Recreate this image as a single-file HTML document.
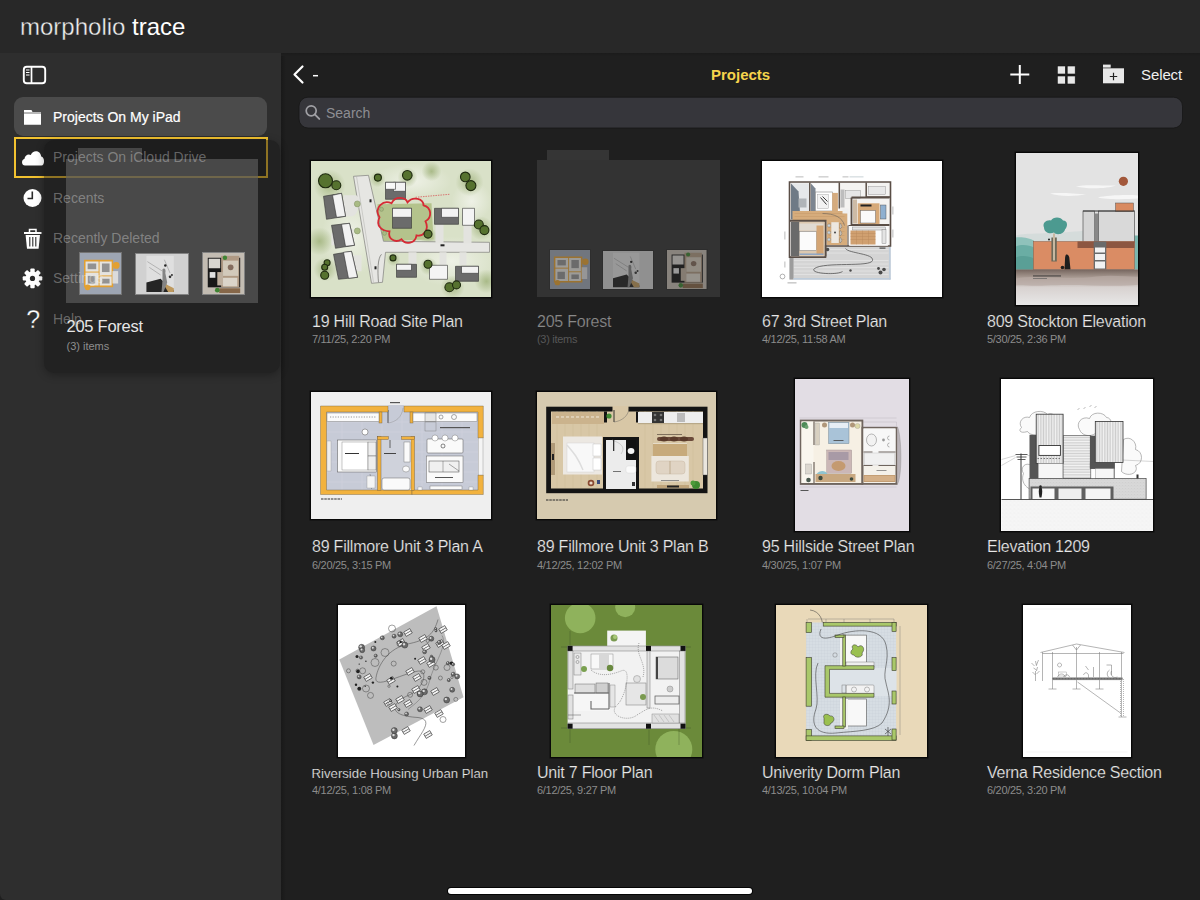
<!DOCTYPE html>
<html><head><meta charset="utf-8">
<style>
*{box-sizing:border-box;margin:0;padding:0}
html,body{width:1200px;height:900px;overflow:hidden;background:#1f1f1f;font-family:"Liberation Sans",sans-serif;line-height:1}
.abs{position:absolute}
#top{left:0;top:0;width:1200px;height:53px;background:#282828}
#logo{left:20px;top:14.7px;font-size:24px;color:#f2f2f2;white-space:nowrap}
#side{left:0;top:53px;width:281px;height:847px;background:#2e2e2e;border-bottom-left-radius:6px}
#main{left:281px;top:53px;width:919px;height:847px;background:#1f1f1f}
.t{position:absolute;font-size:16px;color:#e8e8e8;white-space:nowrap;letter-spacing:-0.22px;-webkit-text-stroke:0.2px #1f1f1f}
.d{position:absolute;font-size:11px;color:#8c8c8c;white-space:nowrap;letter-spacing:-0.3px}
.th{position:absolute;overflow:hidden;border:1px solid #080808;box-shadow:0 0 0 0.6px rgba(0,0,0,0.45)}
.sl{position:absolute;left:53px;font-size:14px;color:#fff;white-space:nowrap}
.b{-webkit-text-stroke:0.2px #fff}
svg{position:absolute;overflow:visible}
</style></head><body>
<div id="top" class="abs"></div>
<div id="logo" class="abs"><span style="color:#f0f0f0;-webkit-text-stroke:0.35px #282828">morpholio</span> <span style="color:#fff">trace</span></div>
<div id="side" class="abs"></div>
<div id="main" class="abs"></div>
<div class="abs" style="left:281px;top:53px;width:5px;height:847px;background:linear-gradient(90deg,#191919,#1f1f1f)"></div>
<div class="abs" style="left:281px;top:53px;width:919px;height:3px;background:linear-gradient(#1b1b1b,#1f1f1f)"></div>

<!-- ===== SIDEBAR ===== -->
<svg style="left:0;top:0" width="60" height="100">
  <rect x="23.8" y="66.8" width="21.4" height="16.4" rx="3" fill="none" stroke="#fff" stroke-width="1.9"/>
  <line x1="31.5" y1="67" x2="31.5" y2="83" stroke="#fff" stroke-width="1.7"/>
  <line x1="26" y1="70" x2="29.5" y2="70" stroke="#fff" stroke-width="1"/>
  <line x1="26" y1="72.5" x2="29.5" y2="72.5" stroke="#fff" stroke-width="1"/>
  <line x1="26" y1="75" x2="29.5" y2="75" stroke="#fff" stroke-width="1"/>
</svg>
<div class="abs" style="left:14px;top:97px;width:253px;height:39px;border-radius:9px;background:#4b4b4b"></div>
<svg style="left:0;top:0" width="60" height="140">
  <path d="M24 110 h7.5 l1 2 H41 V124.7 H24 Z" fill="#fff"/>
  <path d="M24 113 H41" stroke="#4b4b4b" stroke-width="0.8"/>
</svg>
<div class="sl b" style="top:109.5px">Projects On My iPad</div>

<!-- iCloud row (drop target) -->
<div class="abs" style="left:14px;top:137px;width:254px;height:41px;border:2px solid #f2c230;background:#252525"></div>
<svg style="left:0;top:0" width="60" height="200">
  <path d="M25 165.6 C21.5 165.6 20.8 160 24.5 158.8 C24.8 155 28.5 153.5 30.8 155 C32.3 149.8 40.5 149.5 41.2 156.5 C45 157 45 165.6 41.5 165.6 Z" fill="#fff"/>
</svg>

<svg style="left:0;top:0" width="60" height="340">
  <circle cx="32.5" cy="198" r="9" fill="#fff"/>
  <path d="M32.3 191.5 V198.5 H27.5" fill="none" stroke="#2a2a2a" stroke-width="1.6"/>
  <!-- trash -->
  <path d="M24 233 H41.5" stroke="#fff" stroke-width="2"/>
  <path d="M29.5 232.5 V229.5 H36 V232.5" fill="none" stroke="#fff" stroke-width="1.5"/>
  <path d="M25.6 235 H40 L38.6 248.7 H27 Z" fill="#fff"/>
  <path d="M29.8 237 V246.5 M32.8 237 V246.5 M35.8 237 V246.5" stroke="#2a2a2a" stroke-width="1.1"/>
  <!-- gear -->
  <g transform="translate(32.5 278.4)">
    <circle r="7" fill="#fff"/>
    <g fill="#fff">
      <rect x="-2.2" y="-9.8" width="4.4" height="19.6" rx="1"/>
      <rect x="-2.2" y="-9.8" width="4.4" height="19.6" rx="1" transform="rotate(45)"/>
      <rect x="-2.2" y="-9.8" width="4.4" height="19.6" rx="1" transform="rotate(90)"/>
      <rect x="-2.2" y="-9.8" width="4.4" height="19.6" rx="1" transform="rotate(135)"/>
    </g>
    <circle r="2.6" fill="#2a2a2a"/>
  </g>
</svg>
<div class="abs" style="left:26.3px;top:307px;font-size:25px;color:#fff;-webkit-text-stroke:0.3px #2e2e2e">?</div>

<!-- drag overlay -->
<div class="abs" style="left:44px;top:140px;width:236px;height:233px;border-radius:10px;background:rgba(20,20,20,0.45);box-shadow:0 2px 8px rgba(0,0,0,0.3)"></div>
<div class="abs" style="left:78px;top:148px;width:64px;height:11px;background:rgba(95,95,95,0.62)"></div>
<div class="abs" style="left:66px;top:159px;width:192px;height:144px;background:rgba(95,95,95,0.65)"></div>
<div class="abs" style="left:79px;top:252px;width:43px;height:43px;border:1px solid #777;opacity:0.92"><svg width="100%" height="100%" viewBox="0 0 43 43" preserveAspectRatio="none" style="position:static;display:block">
<rect width="43" height="43" fill="#a5adbc"/>
<rect x="5" y="8" width="29" height="27" fill="#f3f1ec"/>
<path d="M5 8 H34 V35 H5 Z" fill="none" stroke="#f0a830" stroke-width="1.6"/>
<path d="M20 8 V35 M5 20 H20 M20 24 H34" stroke="#f0a830" stroke-width="1"/>
<g fill="#999"><rect x="8" y="11" width="9" height="6"/><rect x="23" y="11" width="8" height="9"/><rect x="8" y="24" width="8" height="8"/><rect x="23" y="27" width="8" height="5"/></g>
<circle cx="38" cy="13" r="3.5" fill="#f0a830"/>
<rect x="34" y="19" width="6" height="13" fill="#e8e8e8"/>
<circle cx="8" cy="36" r="3" fill="#f0a830"/>
</svg>
</div>
<div class="abs" style="left:135px;top:253px;width:54px;height:42px;border:1px solid #888;opacity:0.92"><svg width="100%" height="100%" viewBox="0 0 55 42" preserveAspectRatio="none" style="position:static;display:block">
<rect width="55" height="42" fill="#dddddd"/>
<rect x="11" y="2" width="29" height="38" fill="#ececec"/>
<path d="M12 8 L28 18 M14 14 L26 22 M30 6 L36 20" stroke="#999" stroke-width="0.6"/>
<path d="M11 30 L26 26 L34 34 L40 38 V40 H11 Z" fill="#222"/>
<path d="M28 30 L40 36 V40 H34 Z" fill="#c8a060"/>
<path d="M28 16 C30 14 32 16 31 20 L33 30 L29 40 H27 L28 28 Z" fill="#8a8a8a"/>
<circle cx="31" cy="12" r="1.3" fill="#222"/>
<circle cx="36" cy="24" r="1.4" fill="#333"/><circle cx="38" cy="22" r="1.1" fill="#333"/>
</svg>
</div>
<div class="abs" style="left:202px;top:252px;width:43px;height:43px;border:1px solid #888;opacity:0.92"><svg width="100%" height="100%" viewBox="0 0 43 43" preserveAspectRatio="none" style="position:static;display:block">
<rect width="43" height="43" fill="#cec6bb"/>
<rect x="5" y="5" width="34" height="31" fill="#141414"/>
<rect x="6" y="6" width="12" height="10" fill="#e6e2dc"/>
<rect x="19" y="3" width="19" height="33" fill="#b8a088"/>
<rect x="21" y="8" width="16" height="16" fill="#ded4c4"/>
<circle cx="29" cy="15" r="3" fill="#8a7060"/>
<rect x="15" y="20" width="6" height="14" fill="#c8b8a6"/>
<rect x="7" y="20" width="6" height="6" fill="#eee"/>
<rect x="21" y="26" width="15" height="9" fill="#e8e0d4"/>
<rect x="17" y="37" width="22" height="5" fill="#8c6a4a"/>
<circle cx="15" cy="39" r="2.5" fill="#3f8a32"/><circle cx="23" cy="5" r="2.3" fill="#3f8a32"/>
</svg>
</div>
<div class="sl" style="top:150.2px;color:rgba(255,255,255,0.33)">Projects On iCloud Drive</div>
<div class="sl" style="top:190.5px;color:rgba(255,255,255,0.33)">Recents</div>
<div class="sl" style="top:230.8px;color:rgba(255,255,255,0.33)">Recently Deleted</div>
<div class="sl" style="top:271.3px;color:rgba(255,255,255,0.33)">Settings</div>
<div class="sl" style="top:311.8px;color:rgba(255,255,255,0.33)">Help</div>
<div class="abs" style="left:66.5px;top:318.3px;font-size:16.5px;color:#e6e6e6;letter-spacing:-0.25px;white-space:nowrap">205 Forest</div>
<div class="abs" style="left:66.5px;top:341px;font-size:11px;color:#8e8e8e;white-space:nowrap">(3) items</div>

<!-- ===== MAIN HEADER ===== -->
<svg style="left:0;top:0" width="1200" height="140">
  <path d="M302.5 66.5 L294.5 74.5 L302.5 82.5" fill="none" stroke="#fff" stroke-width="2.2" stroke-linecap="round" stroke-linejoin="round"/>
  <path d="M313 75.7 H318" stroke="#fff" stroke-width="1.5"/>
  <path d="M1010.3 74.6 H1029.3 M1019.8 65.1 V84.1" stroke="#fff" stroke-width="2"/>
  <g fill="#e8e8e8" stroke="#111" stroke-width="0.6">
    <rect x="1057.3" y="66" width="8" height="8"/><rect x="1067.2" y="66" width="8" height="8"/>
    <rect x="1057.3" y="76" width="8" height="8"/><rect x="1067.2" y="76" width="8" height="8"/>
  </g>
  <path d="M1103 64.6 h7.7 v3 H1103 Z" fill="#e8e8e8"/>
  <path d="M1103 68.3 H1124 V83.3 H1103 Z" fill="#e8e8e8"/>
  <path d="M1109.8 76.5 H1117.2 M1113.5 72.8 V80.2" stroke="#222" stroke-width="1.2"/>
  <!-- search -->
  <rect x="299" y="97.2" width="883.5" height="30.8" rx="9" fill="#36363b" stroke="#161616" stroke-width="0.8"/>
  <circle cx="311.2" cy="110.8" r="5" fill="none" stroke="#a0a0a5" stroke-width="1.7"/>
  <path d="M314.8 114.4 L319.3 118.9" stroke="#a0a0a5" stroke-width="1.9" stroke-linecap="round"/>
</svg>
<div class="abs" style="left:711px;top:67.3px;font-size:15px;font-weight:bold;color:#f6d44c">Projects</div>
<div class="abs" style="left:1141px;top:67px;font-size:15px;color:#f0f0f0;letter-spacing:-0.1px">Select</div>
<div class="abs" style="left:326px;top:105.7px;font-size:14px;color:#8e8e93">Search</div>

<!-- ===== GRID TITLES ===== -->
<div class="t" style="left:312px;top:313.5px">19 Hill Road Site Plan</div>
<div class="d" style="left:312px;top:334.4px">7/11/25, 2:20 PM</div>
<div class="t" style="left:537px;top:313.5px;color:#8a8a8a">205 Forest</div>
<div class="d" style="left:537px;top:334.4px;color:#575757">(3) items</div>
<div class="t" style="left:762px;top:313.5px">67 3rd Street Plan</div>
<div class="d" style="left:762px;top:334.4px">4/12/25, 11:58 AM</div>
<div class="t" style="left:987px;top:313.5px">809 Stockton Elevation</div>
<div class="d" style="left:987px;top:334.4px">5/30/25, 2:36 PM</div>

<div class="t" style="left:312px;top:538.8px">89 Fillmore Unit 3 Plan A</div>
<div class="d" style="left:312px;top:559.7px">6/20/25, 3:15 PM</div>
<div class="t" style="left:537px;top:538.8px">89 Fillmore Unit 3 Plan B</div>
<div class="d" style="left:537px;top:559.7px">4/12/25, 12:02 PM</div>
<div class="t" style="left:762px;top:538.8px">95 Hillside Street Plan</div>
<div class="d" style="left:762px;top:559.7px">4/30/25, 1:07 PM</div>
<div class="t" style="left:987px;top:538.8px">Elevation 1209</div>
<div class="d" style="left:987px;top:559.7px">6/27/25, 4:04 PM</div>

<div class="t" style="left:311.5px;top:766.5px;font-size:13.2px;letter-spacing:0">Riverside Housing Urban Plan</div>
<div class="d" style="left:312px;top:785.4px">4/12/25, 1:08 PM</div>
<div class="t" style="left:537px;top:764.6px">Unit 7 Floor Plan</div>
<div class="d" style="left:537px;top:785.4px">6/12/25, 9:27 PM</div>
<div class="t" style="left:762px;top:764.6px">Univerity Dorm Plan</div>
<div class="d" style="left:762px;top:785.4px">4/13/25, 10:04 PM</div>
<div class="t" style="left:987px;top:764.6px">Verna Residence Section</div>
<div class="d" style="left:987px;top:785.4px">6/20/25, 3:20 PM</div>

<!-- ===== THUMBNAILS ===== -->
<div class="th" style="left:310px;top:160px;width:182px;height:138px;background:#d9e1c8"><svg width="180" height="136" viewBox="-0.5 -0.3 180 136" preserveAspectRatio="none" style="position:static;display:block">
<defs>
<radialGradient id="g1a" cx="50%" cy="50%" r="50%"><stop offset="0" stop-color="#eef1e6"/><stop offset="1" stop-color="#eef1e6" stop-opacity="0"/></radialGradient><radialGradient id="g1b" cx="50%" cy="50%" r="50%"><stop offset="0" stop-color="#a9ba88"/><stop offset="1" stop-color="#a9ba88" stop-opacity="0"/></radialGradient>
</defs>
<rect width="179" height="135" fill="#d9e1c8"/>
<ellipse cx="100" cy="20" rx="40" ry="18" fill="url(#g1a)"/>
<ellipse cx="40" cy="75" rx="30" ry="40" fill="url(#g1a)"/>
<ellipse cx="140" cy="100" rx="45" ry="25" fill="url(#g1a)"/>
<ellipse cx="160" cy="40" rx="20" ry="20" fill="url(#g1a)"/>
<g fill="url(#g1b)">
<circle cx="18" cy="24" r="16"/><circle cx="66" cy="18" r="8"/><circle cx="96" cy="16" r="10"/><circle cx="158" cy="21" r="14"/>
<circle cx="170" cy="67" r="12"/><circle cx="117" cy="75" r="9"/><circle cx="14" cy="108" r="12"/><circle cx="117" cy="105" r="9"/>
<circle cx="141" cy="126" r="12"/><circle cx="82" cy="98" r="7"/><circle cx="8" cy="80" r="14"/><circle cx="175" cy="120" r="12"/><circle cx="120" cy="10" r="10"/>
</g>
<!-- lawn -->
<path d="M66 43 L120 42 L122 78 L66 80 Z" fill="#b4c38c"/>
<!-- roads -->
<path d="M42 15 L57 14 L72 80 L178 81 L178 91 L74 91 L71 121 L60 122 Z" fill="#e6e6e3" stroke="#8a8a86" stroke-width="0.8"/>
<path d="M45 15 L62 121" stroke="#b0b0ac" stroke-width="0.5"/>
<path d="M70 93 C66 97 66 110 67 121" fill="none" stroke="#7a7a76" stroke-width="0.8"/>
<!-- driveways -->
<path d="M124 63 H132 V82 H124 Z M152 63 H160 V82 H152 Z M97 91 H105 V103 H97 Z M128 91 H135 V104 H128 Z M148 91 H155 V104 H148 Z" fill="#e3e3df"/>
<path d="M32 34 H44 C50 34 48 55 40 55 H32Z M27 68 H42 V84 H20 V72Z M30 94 H50 V110 H30Z" fill="#e3e3df"/>
<!-- houses -->
<g stroke="#333" stroke-width="0.6">
<path d="M12 35 L30 32 L34 55 L15 58 Z" fill="#6b6b6b"/><path d="M21 34 L30 32 L34 55 L25 56 Z" fill="#f2f2f2"/>
<path d="M20 64 L38 62 L43 84 L24 87 Z" fill="#6b6b6b"/><path d="M30 63 L38 62 L43 84 L34 85 Z" fill="#f2f2f2"/>
<path d="M22 93 L40 90 L46 116 L27 118 Z" fill="#6b6b6b"/><path d="M32 91 L40 90 L46 116 L37 117 Z" fill="#f2f2f2"/>
<path d="M74 21 H94 V38 H74 Z" fill="#6b6b6b"/><path d="M82 21 H94 V30 H82 Z" fill="#f2f2f2"/><path d="M74 21 H84 V28 H74Z" fill="#f8f8f8"/>
<path d="M81 47 H100 V67 H81 Z" fill="#6b6b6b"/><path d="M81 47 H100 V56 H81 Z" fill="#f2f2f2"/>
<path d="M123 47 H147 V63 H123 Z" fill="#6b6b6b"/><path d="M130 47 H147 V56 H130 Z" fill="#f2f2f2"/>
<path d="M151 47 H163 V64 H151 Z" fill="#f4f4f4"/>
<path d="M85 103 H105 V116 H85 Z" fill="#6b6b6b"/><path d="M85 103 H100 V109 H85 Z" fill="#f2f2f2"/>
<path d="M118 104 H136 V118 H118 Z" fill="#f4f4f4"/>
<path d="M144 105 H167 V120 H144 Z" fill="#6b6b6b"/><path d="M150 105 H167 V112 H150 Z" fill="#f2f2f2"/>
</g>
<!-- red cloud -->
<path d="M68 56 C62 46 72 38 80 42 C84 34 94 36 96 41 C102 34 112 38 112 44 C120 46 121 56 114 60 C118 68 112 76 105 74 C104 82 94 84 90 78 C84 82 76 78 78 70 C70 70 64 64 68 56 Z" fill="none" stroke="#d62b35" stroke-width="1.8"/>
<path d="M104 36 L138 33" stroke="#d62b35" stroke-width="0.6" stroke-dasharray="1.5 1"/>
<!-- trees -->
<g fill="#56722f" stroke="#1f2a10" stroke-width="1.1">
<circle cx="14" cy="19.5" r="7"/><circle cx="24.8" cy="24" r="4.5"/>
<circle cx="66.4" cy="16.3" r="3.5"/><circle cx="95.8" cy="14" r="4.8"/>
<circle cx="153.8" cy="15.6" r="4.8"/><circle cx="159.4" cy="24.3" r="5"/>
<circle cx="167.3" cy="63.2" r="4.5"/><circle cx="172.9" cy="68.8" r="4.5"/>
<circle cx="116.5" cy="72.8" r="4"/><circle cx="15.6" cy="101.4" r="3"/><circle cx="13.2" cy="106" r="3"/><circle cx="13.2" cy="114" r="4"/>
<circle cx="116.5" cy="103" r="4"/><circle cx="137.9" cy="126" r="4.5"/><circle cx="145" cy="123.6" r="4"/>
<circle cx="81.5" cy="96.6" r="3"/>
</g>
<g fill="#a9bb84" stroke="#7d8c60" stroke-width="0.5">
<circle cx="45.8" cy="42.6" r="3"/><circle cx="45.8" cy="69.6" r="3"/><circle cx="70" cy="48" r="2"/><circle cx="73" cy="72" r="2"/>
</g>
<g fill="#222"><rect x="58" y="38" width="2" height="3"/><rect x="129" y="83" width="4" height="2"/><rect x="63" y="105" width="2" height="3"/></g>
</svg>
</div>
<div class="abs" style="left:547px;top:150px;width:62px;height:10px;background:#353535"></div>
<div class="abs" style="left:537px;top:160px;width:183px;height:137px;background:#333"></div>
<div class="abs" style="left:549px;top:249px;width:42px;height:41px;border:1px solid #2a2a2a;opacity:0.55"><svg width="100%" height="100%" viewBox="0 0 43 43" preserveAspectRatio="none" style="position:static;display:block">
<rect width="43" height="43" fill="#a5adbc"/>
<rect x="5" y="8" width="29" height="27" fill="#f3f1ec"/>
<path d="M5 8 H34 V35 H5 Z" fill="none" stroke="#f0a830" stroke-width="1.6"/>
<path d="M20 8 V35 M5 20 H20 M20 24 H34" stroke="#f0a830" stroke-width="1"/>
<g fill="#999"><rect x="8" y="11" width="9" height="6"/><rect x="23" y="11" width="8" height="9"/><rect x="8" y="24" width="8" height="8"/><rect x="23" y="27" width="8" height="5"/></g>
<circle cx="38" cy="13" r="3.5" fill="#f0a830"/>
<rect x="34" y="19" width="6" height="13" fill="#e8e8e8"/>
<circle cx="8" cy="36" r="3" fill="#f0a830"/>
</svg>
</div>
<div class="abs" style="left:602px;top:249.5px;width:52px;height:40px;border:1px solid #2a2a2a;opacity:0.55"><svg width="100%" height="100%" viewBox="0 0 55 42" preserveAspectRatio="none" style="position:static;display:block">
<rect width="55" height="42" fill="#dddddd"/>
<rect x="11" y="2" width="29" height="38" fill="#ececec"/>
<path d="M12 8 L28 18 M14 14 L26 22 M30 6 L36 20" stroke="#999" stroke-width="0.6"/>
<path d="M11 30 L26 26 L34 34 L40 38 V40 H11 Z" fill="#222"/>
<path d="M28 30 L40 36 V40 H34 Z" fill="#c8a060"/>
<path d="M28 16 C30 14 32 16 31 20 L33 30 L29 40 H27 L28 28 Z" fill="#8a8a8a"/>
<circle cx="31" cy="12" r="1.3" fill="#222"/>
<circle cx="36" cy="24" r="1.4" fill="#333"/><circle cx="38" cy="22" r="1.1" fill="#333"/>
</svg>
</div>
<div class="abs" style="left:666px;top:249px;width:41.5px;height:41px;border:1px solid #2a2a2a;opacity:0.55"><svg width="100%" height="100%" viewBox="0 0 43 43" preserveAspectRatio="none" style="position:static;display:block">
<rect width="43" height="43" fill="#cec6bb"/>
<rect x="5" y="5" width="34" height="31" fill="#141414"/>
<rect x="6" y="6" width="12" height="10" fill="#e6e2dc"/>
<rect x="19" y="3" width="19" height="33" fill="#b8a088"/>
<rect x="21" y="8" width="16" height="16" fill="#ded4c4"/>
<circle cx="29" cy="15" r="3" fill="#8a7060"/>
<rect x="15" y="20" width="6" height="14" fill="#c8b8a6"/>
<rect x="7" y="20" width="6" height="6" fill="#eee"/>
<rect x="21" y="26" width="15" height="9" fill="#e8e0d4"/>
<rect x="17" y="37" width="22" height="5" fill="#8c6a4a"/>
<circle cx="15" cy="39" r="2.5" fill="#3f8a32"/><circle cx="23" cy="5" r="2.3" fill="#3f8a32"/>
</svg>
</div>
<div class="th" style="left:761px;top:160px;width:182px;height:138px;background:#fff"><svg width="180" height="136" viewBox="-0.5 -0.5 180 136" preserveAspectRatio="none" style="position:static;display:block">
<rect x="-1" y="-1" width="182" height="138" fill="#fff"/>
<g fill="#aaa"><rect x="33" y="15" width="8" height="0.8"/><rect x="56" y="15" width="10" height="0.8"/><rect x="80" y="15" width="6" height="0.8"/><rect x="87" y="15" width="14" height="0.8" fill="#bcc8cc"/>
<rect x="130" y="45" width="0.8" height="8"/><rect x="130" y="68" width="0.8" height="8"/><rect x="22" y="70" width="0.8" height="8"/><rect x="22" y="100" width="0.8" height="6"/></g>
<!-- patio -->
<path d="M63 84.5 H128 V118 H27 V95.6 H63 Z" fill="#d4d4d4"/>
<g stroke="#e6e6e6" stroke-width="0.7"><path d="M64 88 H126 M64 91.5 H126 M31 99 H126 M31 102.5 H126 M31 106 H126 M31 109.5 H126 M31 113 H126"/></g>
<rect x="27" y="95.6" width="4" height="22.4" fill="#9c9c9c"/>
<rect x="31" y="116.6" width="97" height="1.6" fill="#bccbdb"/>
<rect x="126.6" y="84.5" width="1.6" height="33.5" fill="#bccbdb"/>
<path d="M83 87 C86 92 112 92 110 99 C108 106 62 100 52 107 C46 112 74 114 80 110" fill="none" stroke="#555" stroke-width="0.8"/>
<g fill="#4a4a4a"><circle cx="118" cy="111" r="2"/><circle cx="121.5" cy="108" r="1.8"/><circle cx="116" cy="107" r="1.4"/><circle cx="88" cy="109" r="1.2"/><rect x="117" y="86" width="6" height="1.2"/><circle cx="65" cy="88" r="1.8"/></g>
<circle cx="20" cy="115" r="2.4" fill="none" stroke="#666" stroke-width="0.5"/>
<rect x="25" y="121" width="9" height="0.8" fill="#999"/>
<!-- building base -->
<path d="M27 20.5 H128 V84.5 H63 V95.6 H27 Z" fill="#f4f3f1" stroke="#5a4e46" stroke-width="1.6"/>
<!-- top-left bath -->
<rect x="28.5" y="22" width="18.5" height="36" fill="#e6e8ea"/>
<path d="M28.5 22 L36 30 L38 58 H28.5 Z" fill="#6f7a86"/>
<rect x="36" y="37" width="8" height="9" fill="#b0b4b8"/>
<path d="M47.3 21 V50" stroke="#5a4e46" stroke-width="1.5"/>
<!-- bedroom top -->
<rect x="48.5" y="22" width="28" height="28.5" fill="#fbfbfb"/>
<path d="M48.5 22 L53 27 V50 H48.5 Z" fill="#7c8590"/>
<rect x="53" y="30.5" width="17" height="19" fill="#fff" stroke="#888" stroke-width="0.6"/>
<rect x="55" y="33" width="11" height="14" fill="#f2f2f2" stroke="#999" stroke-width="0.4"/>
<path d="M58 36 L64 43 M60 35 L65 40" stroke="#222" stroke-width="0.9"/>
<rect x="69.7" y="31.4" width="5.7" height="21.8" fill="#d5ab7e"/>
<path d="M76.8 21 V47" stroke="#5a4e46" stroke-width="1.5"/>
<!-- top middle bath -->
<rect x="78" y="28" width="4" height="18" fill="#bdbdbd"/>
<rect x="83" y="29" width="15" height="8" fill="#e6e6e6" stroke="#888" stroke-width="0.4"/>
<path d="M103.7 21 V36" stroke="#5a4e46" stroke-width="1.5"/>
<rect x="106" y="25" width="17" height="8" fill="#e8e8e8" stroke="#888" stroke-width="0.4"/>
<path d="M104 35.5 H128" stroke="#5a4e46" stroke-width="1.5"/>
<!-- right bedroom -->
<path d="M89 36 H127 M89 36 V63.5 H127" fill="none" stroke="#5a4e46" stroke-width="1.8"/>
<rect x="90.5" y="38" width="4" height="24" fill="#cdbba6"/>
<rect x="95.2" y="41.8" width="21.8" height="20.8" fill="#d6a978"/>
<rect x="98" y="49" width="15" height="12.5" fill="#fafafa" stroke="#666" stroke-width="0.5"/>
<rect x="98" y="43" width="11" height="2" fill="#222"/>
<rect x="118" y="43.5" width="5.5" height="14" fill="#8fb0d0" stroke="#444" stroke-width="0.4"/>
<!-- corridor wood -->
<path d="M30 49.4 H84.8 V83.4 H64 V59.8 H30 Z" fill="#d6ac7c"/>
<g stroke="#c49868" stroke-width="0.5"><path d="M32 52 H82 M32 55 H82 M66 62 H82 M66 66 H82 M66 70 H82 M66 74 H82 M66 78 H82"/></g>
<path d="M60 52 C72 52 80 56 82 64" fill="none" stroke="#555" stroke-width="0.5"/>
<rect x="80" y="47" width="6" height="5" fill="#f0f0f0"/>
<!-- bedroom bottom left -->
<path d="M27.5 59.3 H63 V95" fill="none" stroke="#5a4e46" stroke-width="2"/>
<rect x="28.5" y="60.5" width="33.5" height="34" fill="#dcc8b0"/>
<rect x="28.5" y="60.5" width="8.2" height="34" fill="#6a6a6a"/>
<rect x="37" y="62" width="24" height="7" fill="#e0dad2"/>
<rect x="37" y="70" width="17" height="19" fill="#fbfbfb" stroke="#777" stroke-width="0.5"/>
<rect x="54" y="64" width="7" height="29" fill="#d4a574"/>
<rect x="37" y="92" width="24" height="1.4" fill="#88a4c8"/>
<!-- dining -->
<rect x="68.8" y="60.7" width="7.5" height="20.8" fill="#ece7e0"/>
<circle cx="72.5" cy="71" r="1" fill="#444"/>
<g fill="#c8d2d8" stroke="#666" stroke-width="0.3"><circle cx="66.5" cy="64" r="1.6"/><circle cx="66.5" cy="71" r="1.6"/><circle cx="66.5" cy="78" r="1.6"/></g>
<g fill="#e0d8cc" stroke="#555" stroke-width="0.4"><path d="M77.5 62 a3 3 0 0 1 0 5.5 Z M77.5 69 a3 3 0 0 1 0 5.5 Z M77.5 76 a3 3 0 0 1 0 5.5 Z"/></g>
<!-- kitchen -->
<rect x="86.7" y="64.5" width="38.7" height="19.8" fill="#fafafa"/>
<rect x="88" y="69" width="25" height="14" fill="#d0a070"/>
<g stroke="#b8895a" stroke-width="0.4"><path d="M88 72 H113 M88 75 H113 M88 78 H113 M94 69 V83 M100 69 V83 M106 69 V83"/></g>
<rect x="90" y="65.5" width="33" height="3" fill="#e4e4e4" stroke="#777" stroke-width="0.4"/>
<rect x="119.5" y="68" width="4" height="14" fill="#e4e4e4" stroke="#777" stroke-width="0.4"/>
<path d="M85.5 64 V84.5 M86 64 H126" stroke="#5a4e46" stroke-width="1"/>
</svg></div>
<div class="th" style="left:1015px;top:152px;width:124px;height:154px;background:#e3e3e3"><svg width="122" height="152" viewBox="0 -0.5 122 152" preserveAspectRatio="none" style="position:static;display:block">
<defs>
<linearGradient id="g4g" x1="0" y1="0" x2="0" y2="1"><stop offset="0" stop-color="#75655e"/><stop offset="0.22" stop-color="#a89a92"/><stop offset="0.5" stop-color="#d8d2d0"/><stop offset="1" stop-color="#e8e8e8"/></linearGradient>
</defs>
<rect x="0" y="0" width="124" height="152" fill="#e3e3e3"/>
<!-- clouds -->
<path d="M60 33 C68 31 80 32 100 32 C92 35 72 36 60 33 Z" fill="#f6f6f6"/>
<path d="M34 40 C44 39 58 40 70 41 C58 43 42 43 34 40 Z" fill="#f6f6f6"/>
<path d="M82 44 C90 42 110 41 122 42 L122 45 C108 46 90 46 82 44 Z" fill="#f6f6f6"/>
<circle cx="107.4" cy="27.8" r="4.6" fill="#a2573a"/>
<!-- hills -->
<path d="M0 82 C10 79 30 81 70 77 C90 75 110 82 124 84 V116 H0 Z" fill="#d5dcdb"/>
<path d="M0 84 C6 83 14 85 18 87 V116 H0 Z" fill="#8fc2bb"/>
<path d="M0 93 C6 90 14 92 18 94 V116 H0 Z" fill="#6aada4"/>
<path d="M0 104 C6 101 14 103 18 105 V116 H0 Z" fill="#5a9f96"/>
<rect x="118" y="82" width="6" height="34" fill="#7ab6ae"/>
<!-- upper volumes -->
<rect x="67" y="57.5" width="11.5" height="31.5" fill="#d5d5d5" stroke="#555" stroke-width="0.7"/>
<rect x="78.5" y="60" width="4" height="29" fill="#888"/>
<rect x="82.5" y="57.5" width="36" height="31.5" fill="#d9d9d9" stroke="#555" stroke-width="0.7"/>
<rect x="99.5" y="49.5" width="18" height="8.5" fill="#d98a60" stroke="#555" stroke-width="0.5"/>
<path d="M67 57.5 H118.5" stroke="#333" stroke-width="1"/>
<!-- wall -->
<rect x="17.4" y="88" width="101" height="28" fill="#da8c64" stroke="#8a5a44" stroke-width="0.5"/>
<rect x="61.5" y="88" width="57" height="6.5" fill="#8c5641"/>
<rect x="77.7" y="88" width="12.6" height="28" fill="#6a6a6a"/>
<rect x="79" y="94" width="10" height="5" fill="#f2f2f2"/><rect x="79" y="100.5" width="10" height="6" fill="#f2f2f2"/><rect x="79" y="108" width="10" height="7" fill="#f2f2f2"/>
<!-- tree -->
<rect x="35.4" y="84" width="5.4" height="24" fill="#6d6a5a"/>
<rect x="37" y="80" width="2" height="27" fill="#c8b8a0"/>
<path d="M28 74 C26 69 31 66 35 67 C37 63 45 63 47 67 C52 67 52 73 49 76 C48 81 40 82 38 79 C34 81 28 79 28 74 Z" fill="#4c9a90"/>
<circle cx="33" cy="86" r="1" fill="#222"/>
<!-- person -->
<path d="M50.5 101 C52.5 101 53.5 103 53.5 106 L54.5 116 H48.5 L49 106 C49 103 49.5 101 50.5 101 Z" fill="#1e1e1e"/>
<circle cx="46.5" cy="114" r="1.8" fill="#1e1e1e"/>
<!-- ground -->
<rect x="0" y="116" width="124" height="36" fill="url(#g4g)"/>
<path d="M0 125 C20 121 50 127 80 123 C100 121 115 124 124 123 V131 C100 134 60 130 30 132 C15 133 5 131 0 132 Z" fill="#b8aaa4" opacity="0.7"/>
<rect x="17" y="122" width="28" height="0.9" fill="#333"/><rect x="17" y="124.5" width="14" height="0.6" fill="#555"/>
</svg>
</div>

<div class="th" style="left:310px;top:391px;width:182px;height:129px;background:#efefef"><svg width="180" height="127" viewBox="-1 0 180 127" preserveAspectRatio="none" style="position:static;display:block">
<rect width="178" height="126" fill="#efefef"/>
<!-- floor -->
<rect x="14" y="19" width="152" height="80" fill="#c7cbd7"/>
<g stroke="#d3d6e0" stroke-width="0.4"><path d="M14 30 H166 M14 40 H166 M14 50 H166 M14 60 H166 M14 70 H166 M14 80 H166 M14 90 H166 M30 19 V99 M50 19 V99 M70 19 V99 M90 19 V99 M110 19 V99 M130 19 V99 M150 19 V99"/></g>
<!-- entrance door area -->
<rect x="76" y="13" width="16" height="8" fill="#c7cbd7"/>
<path d="M76 18 V31" stroke="#444" stroke-width="0.9"/><path d="M76 31 C84 30 90 25 91 16" fill="none" stroke="#888" stroke-width="0.4"/>
<rect x="78" y="10" width="10" height="1.2" fill="#555"/>
<!-- walls orange -->
<g fill="#f2b23e" stroke="#6a5a40" stroke-width="0.4">
<path d="M8.5 14 H76 V20 H14.5 V98 H100 V102.5 H8.5 Z"/>
<path d="M92 14 H171.3 V46 H166 V20 H92 Z"/>
<path d="M166 83 H171.3 V102.5 H100 V98 H166 Z"/>
<rect x="65.5" y="44.5" width="3.5" height="54"/>
<rect x="99" y="44.5" width="3.5" height="54"/>
<rect x="65.5" y="44.5" width="11" height="3"/><rect x="89.5" y="44.5" width="13" height="3"/>
<rect x="67" y="20" width="3" height="11"/><rect x="98" y="20" width="3" height="11"/>
</g>
<rect x="166.5" y="46" width="4.5" height="37" fill="#f4f4f4" stroke="#888" stroke-width="0.4"/>
<!-- counters -->
<rect x="15" y="21" width="52" height="8.5" fill="#fbfbfb" stroke="#666" stroke-width="0.4"/>
<path d="M18 25 H64" stroke="#555" stroke-width="0.6" stroke-dasharray="1.2 1.4"/>
<rect x="101" y="21" width="64" height="8.5" fill="#fbfbfb" stroke="#666" stroke-width="0.4"/>
<rect x="113" y="21" width="11" height="8.5" fill="#e6e6e6" stroke="#555" stroke-width="0.4"/>
<circle cx="129" cy="25" r="2" fill="none" stroke="#555" stroke-width="0.5"/><circle cx="142" cy="25" r="2.5" fill="none" stroke="#555" stroke-width="0.5"/>
<rect x="113" y="30" width="11" height="9" fill="none" stroke="#777" stroke-width="0.4"/>
<rect x="128" y="35" width="30" height="1.2" fill="#555"/>
<!-- bed -->
<rect x="25.6" y="48" width="39" height="32" fill="#f9f9f9" stroke="#555" stroke-width="0.5"/>
<rect x="30" y="50" width="26" height="28" fill="#fff" stroke="#777" stroke-width="0.4"/>
<rect x="56" y="50" width="8" height="14" fill="#eee" stroke="#555" stroke-width="0.4"/><rect x="56" y="64" width="8" height="14" fill="#eee" stroke="#555" stroke-width="0.4"/>
<rect x="33" y="61" width="14" height="1" fill="#333"/>
<circle cx="53" cy="40" r="3" fill="#fff" stroke="#555" stroke-width="0.5"/>
<rect x="15" y="49" width="4" height="30" fill="#eee" stroke="#888" stroke-width="0.3"/>
<path d="M58 82 C60 88 56 94 60 97" stroke="#666" fill="none" stroke-width="0.5"/>
<rect x="55" y="84" width="8" height="12" fill="#f4f4f4" stroke="#777" stroke-width="0.3"/>
<!-- bathroom -->
<rect x="70" y="48" width="29" height="50" fill="#cfd2db"/>
<rect x="92" y="50" width="6" height="20" fill="#fafafa" stroke="#666" stroke-width="0.4"/>
<ellipse cx="94" cy="77" rx="3.5" ry="3" fill="#fafafa" stroke="#666" stroke-width="0.4"/>
<rect x="70" y="86" width="28" height="12" rx="2" fill="#fafafa" stroke="#666" stroke-width="0.5"/>
<path d="M78 48 V56" stroke="#444" stroke-width="0.8"/>
<rect x="72" y="61" width="12" height="1" fill="#444"/>
<!-- island -->
<rect x="115" y="47" width="36" height="14" rx="1" fill="#fafafa" stroke="#555" stroke-width="0.5"/>
<g fill="#fff" stroke="#666" stroke-width="0.4"><circle cx="123" cy="46" r="3"/><circle cx="133" cy="46" r="3"/><circle cx="143" cy="46" r="3"/></g>
<circle cx="131" cy="54" r="2" fill="none" stroke="#333" stroke-width="0.6"/>
<!-- living -->
<rect x="114.4" y="64" width="36.6" height="26.3" fill="#fafafa" stroke="#666" stroke-width="0.5"/>
<rect x="117" y="69" width="30" height="11" fill="#f0f0f0" stroke="#444" stroke-width="0.5"/>
<path d="M131 69 V80" stroke="#444" stroke-width="0.4"/><path d="M137 72 L147 79" stroke="#555" stroke-width="0.5"/>
<rect x="123" y="85" width="18" height="1" fill="#555"/>
<rect x="118" y="94" width="32" height="3.5" fill="#fafafa" stroke="#666" stroke-width="0.4"/>
<rect x="106" y="95" width="4" height="3" fill="#fafafa" stroke="#777" stroke-width="0.3"/><rect x="157" y="95" width="4" height="3" fill="#fafafa" stroke="#777" stroke-width="0.3"/>
<!-- label -->
<path d="M9 107 H30" stroke="#333" stroke-width="1.2" stroke-dasharray="2.5 0.8"/>
</svg>
</div>
<div class="th" style="left:536px;top:391px;width:181px;height:129px;background:#d6caaf"><svg width="179" height="127" viewBox="0 0 179 127" preserveAspectRatio="none" style="position:static;display:block">
<rect width="179" height="126" fill="#d6caaf"/>
<!-- outer walls -->
<rect x="9.2" y="14.7" width="161.3" height="86.5" fill="#141414"/>
<!-- floor wood -->
<rect x="14" y="19.5" width="152" height="77" fill="#d8c7a6"/>
<g stroke="#cdb996" stroke-width="0.5"><path d="M20 19.5 V96 M28 19.5 V96 M36 19.5 V96 M44 19.5 V96 M52 19.5 V96 M60 19.5 V96 M108 19.5 V96 M116 19.5 V96 M124 19.5 V96 M132 19.5 V96 M140 19.5 V96 M148 19.5 V96 M156 19.5 V96"/></g>
<!-- entrance gap -->
<rect x="75.5" y="14" width="16" height="6" fill="#d8c7a6"/>
<path d="M77 18 V30" stroke="#222" stroke-width="0.9"/><path d="M77 30 C85 29 91 24 92 17" fill="none" stroke="#555" stroke-width="0.4"/>
<!-- window right -->
<rect x="166" y="46" width="4.5" height="37" fill="#eae6de" stroke="#444" stroke-width="0.4"/>
<!-- wardrobe -->
<rect x="15" y="20" width="52" height="12" fill="#cbb38d"/>
<path d="M19 25 H64" stroke="#f0e8da" stroke-width="1" stroke-dasharray="3 2"/>
<rect x="67" y="19.5" width="3" height="11" fill="#141414"/>
<circle cx="72" cy="24" r="2.6" fill="#3f8a32"/>
<rect x="99" y="19.5" width="3" height="11" fill="#141414"/>
<!-- kitchen counters -->
<rect x="101" y="20" width="65" height="11" fill="#eeeeee"/>
<rect x="115" y="20" width="12" height="11" fill="#333"/>
<g fill="#777"><circle cx="118" cy="23" r="1.3"/><circle cx="124" cy="23" r="1.3"/><circle cx="118" cy="28" r="1.3"/><circle cx="124" cy="28" r="1.3"/></g>
<rect x="140" y="21" width="8" height="9" fill="#bbb"/>
<rect x="101" y="31" width="65" height="1.2" fill="#b8a888"/>
<!-- bed -->
<rect x="26" y="44.5" width="39" height="38" fill="#ece8e2"/>
<rect x="30" y="51" width="27" height="29" fill="#f8f8f8" stroke="#ccc" stroke-width="0.4"/>
<rect x="56" y="52" width="8" height="12" fill="#fff" stroke="#bbb" stroke-width="0.4"/><rect x="56" y="66" width="8" height="12" fill="#fff" stroke="#bbb" stroke-width="0.4"/>
<path d="M30 53 C36 60 40 64 46 78" stroke="#ddd" stroke-width="1.5" fill="none"/>
<rect x="14" y="51" width="4" height="32" fill="#b09a78"/><rect x="15" y="62" width="2" height="6" fill="#222"/>
<circle cx="54" cy="91" r="3.3" fill="#8a4a32"/><circle cx="54" cy="91" r="1.6" fill="#e8d8c8"/>
<rect x="60" y="88" width="3" height="4" fill="#3a4a7a"/>
<!-- bathroom -->
<rect x="66" y="45" width="36" height="56" fill="#141414"/>
<rect x="69" y="48" width="30" height="49" fill="#ececec"/>
<path d="M75 48 C86 52 88 56 84 62" fill="none" stroke="#aaa" stroke-width="0.5"/>
<rect x="76" y="48" width="1.3" height="11" fill="#333"/>
<rect x="89" y="48" width="10" height="20" fill="#111"/>
<ellipse cx="94" cy="59" rx="3.4" ry="3" fill="#f4f4f4"/>
<rect x="89" y="74" width="10" height="7" rx="2" fill="#fafafa" stroke="#ccc" stroke-width="0.3"/>
<rect x="95" y="90" width="3" height="4" fill="#333"/>
<rect x="76" y="79" width="8" height="0.8" fill="#555"/>
<!-- dining -->
<rect x="120" y="45" width="37" height="4" rx="2" fill="#6b4a3a"/>
<g fill="#5a3a2a"><ellipse cx="127" cy="47" rx="4" ry="2.5"/><ellipse cx="137" cy="47" rx="4" ry="2.5"/><ellipse cx="147" cy="47" rx="4" ry="2.5"/></g>
<rect x="116" y="51" width="34" height="14" fill="#c7aa7b"/>
<rect x="116" y="51" width="34" height="1" fill="#e6dcc8"/>
<rect x="120" y="42" width="25" height="0.8" fill="#6a5a4a"/>
<!-- living rug -->
<rect x="114.4" y="64" width="37.4" height="25.5" fill="#ece6dc"/>
<rect x="119" y="69" width="29" height="13" rx="3" fill="#e0d4c4" stroke="#c8b8a4" stroke-width="0.5"/>
<path d="M133 69 V82" stroke="#a89070" stroke-width="0.6"/>
<rect x="120" y="93" width="32" height="3" fill="#bfa47a"/><rect x="130" y="93.5" width="12" height="2" fill="#222"/>
<rect x="124" y="88" width="18" height="0.8" fill="#777"/>
<circle cx="159" cy="93" r="4" fill="#3e8a30"/><circle cx="156" cy="91" r="2.5" fill="#4d9a3a"/>
<!-- label -->
<path d="M9 108 H31" stroke="#2a2a2a" stroke-width="1.2" stroke-dasharray="2.5 0.8"/>
</svg>
</div>
<div class="th" style="left:794px;top:378px;width:116px;height:154px;background:#e2dde4"><svg width="114" height="152" viewBox="-0.5 0 114 152" preserveAspectRatio="none" style="position:static;display:block">
<rect x="0" y="0" width="114" height="152" fill="#e2dde4"/>
<!-- dim lines -->
<path d="M4 39 H101" stroke="#b8b0b8" stroke-width="0.4"/>
<path d="M67 43 H101 V47" stroke="#b8b0b8" stroke-width="0.4" fill="none"/>
<!-- outer plan left -->
<rect x="4.3" y="40.6" width="63.5" height="65.3" fill="#6f655e"/>
<rect x="6" y="42.5" width="60" height="61.5" fill="#f6f0e4"/>
<!-- right part -->
<rect x="66" y="47.8" width="36" height="58" fill="#6f655e"/>
<rect x="68" y="49.5" width="32" height="54.5" fill="#f4f1ea"/>
<path d="M102 48 C106 56 107 96 102 105" fill="#b9b3b8" stroke="#888" stroke-width="0.4"/>
<!-- left corridor -->
<rect x="6" y="42.5" width="12" height="61.5" fill="#f9f6ee"/>
<path d="M18.5 42.5 V66 M18.5 83 V104" stroke="#6f655e" stroke-width="1.2"/>
<circle cx="9" cy="46" r="3" fill="#4e8a58"/><circle cx="11" cy="48" r="2" fill="#6aa070"/>
<rect x="20" y="44" width="4" height="22" fill="#d8d0c0" stroke="#999" stroke-width="0.3"/>
<rect x="10" y="85" width="6" height="10" fill="#dcd8d0" stroke="#888" stroke-width="0.3"/>
<circle cx="13" cy="101" r="2.3" fill="#4b5a50"/>
<!-- bed -->
<rect x="33" y="43.3" width="20.5" height="21.4" fill="#a9c3d8" stroke="#6c7a86" stroke-width="0.4"/>
<rect x="34" y="44" width="18.5" height="5" fill="#e7eef5"/>
<rect x="38" y="61" width="10" height="0.8" fill="#444"/>
<circle cx="29" cy="46" r="2.5" fill="#b0977a"/><circle cx="57" cy="46" r="2.5" fill="#b0977a"/>
<circle cx="62" cy="47" r="2.6" fill="#ddd8a8" stroke="#888" stroke-width="0.3"/>
<!-- rug -->
<rect x="31.2" y="71" width="25" height="23.2" fill="#cbb7b6" stroke="#9e8e8e" stroke-width="0.4"/>
<rect x="33" y="73" width="20" height="8" fill="#a89aa6"/>
<ellipse cx="43" cy="87" rx="7" ry="5" fill="#c49a70"/>
<path d="M20 95 H60 V103 H20 Z" fill="#c8a880"/>
<g fill="#3d4a3e"><circle cx="25" cy="99" r="2.2"/><circle cx="56" cy="100" r="1.8"/></g>
<path d="M21 95 C24 91 30 91 32 95" fill="#8fc4d0"/>
<!-- bathroom -->
<rect x="68" y="49.5" width="32" height="37" fill="#f7f7f7"/>
<ellipse cx="76" cy="61" rx="5" ry="6" fill="#f2f2f2" stroke="#777" stroke-width="0.5"/>
<g fill="none" stroke="#555" stroke-width="0.4"><path d="M94 57 a2 2 0 1 0 0 4"/><path d="M94 64 a2 2 0 1 0 0 4"/></g>
<circle cx="88" cy="61" r="1.4" fill="#999"/>
<path d="M68 73 H77 M83 73 H100" stroke="#6f655e" stroke-width="1"/>
<rect x="69" y="74" width="30" height="12" fill="#f0f0f0" stroke="#aaa" stroke-width="0.3"/>
<path d="M68 86.5 H77 M83 86.5 H100" stroke="#6f655e" stroke-width="1"/>
<rect x="81" y="91" width="10" height="0.6" fill="#555"/>
<rect x="68" y="96" width="32" height="7" fill="#c49e74"/>
<rect x="69" y="97" width="30" height="5" fill="#d4b088"/>
<!-- annotations -->
<path d="M4 108 H101" stroke="#b8b0b8" stroke-width="0.4"/>
<rect x="5" y="111" width="8" height="1" fill="#555"/>
</svg>
</div>
<div class="th" style="left:1000px;top:378px;width:154px;height:154px;background:#fff"><svg width="152" height="152" viewBox="-0.5 -0.5 152 152" preserveAspectRatio="none" style="position:static;display:block">
<defs>
<pattern id="p8v" width="1.6" height="1.6" patternUnits="userSpaceOnUse"><rect width="1.6" height="1.6" fill="#f0f0f0"/><rect width="0.5" height="1.6" fill="#b8b8b8"/></pattern>
<pattern id="p8h" width="2" height="1.6" patternUnits="userSpaceOnUse"><rect width="2" height="1.6" fill="#f2f2f2"/><rect width="2" height="0.5" fill="#bdbdbd"/></pattern>
<pattern id="p8s" width="3" height="3" patternUnits="userSpaceOnUse"><rect width="3" height="3" fill="#e0e0e0"/><circle cx="1" cy="1" r="0.6" fill="#999"/><circle cx="2.4" cy="2.2" r="0.4" fill="#aaa"/></pattern>
<pattern id="p8g" width="4" height="4" patternUnits="userSpaceOnUse"><rect width="4" height="4" fill="#f6f6f6"/><circle cx="1" cy="1.5" r="0.35" fill="#c4c4c4"/><circle cx="3" cy="3" r="0.3" fill="#ccc"/></pattern>
</defs>
<rect width="152" height="152" fill="#fff"/>
<!-- trees (sketch) -->
<g fill="#fafafa" stroke="#8a8a8a" stroke-width="0.6">
<path d="M20 48 C16 42 22 36 28 38 C30 31 42 30 46 35 C52 32 56 38 52 44 C56 48 50 54 44 52 C40 58 28 56 26 52 C20 54 16 52 20 48Z"/>
<path d="M78 50 C74 44 80 36 88 39 C90 32 102 32 105 38 C110 38 112 46 106 50 C108 56 98 58 94 54 C88 58 80 56 78 50Z"/>
<path d="M122 60 C128 56 136 62 134 70 C142 72 142 84 134 86 C138 94 126 98 120 92 Z"/>
<path d="M22 94 C18 88 24 82 30 86 L34 110 C28 112 18 104 22 94 Z"/>
</g>
<g stroke="#777" stroke-width="0.5"><path d="M76 30 l2 -1 M82 29 l2 -1 M88 27 l2 -1 M93 28 l2 -1"/></g>
<!-- pole -->
<path d="M19.5 74 V121" stroke="#333" stroke-width="1"/>
<path d="M14 75 H26 M15 77.5 H25 M16 80 H24" stroke="#333" stroke-width="0.8"/>
<path d="M0 80 L14 76 M0 86 L14 78 M26 76 L152 82" stroke="#888" stroke-width="0.35"/>
<!-- building -->
<rect x="28" y="55.3" width="9" height="44" fill="#555"/>
<rect x="61.6" y="56.2" width="27.7" height="43" fill="url(#p8h)" stroke="#444" stroke-width="0.6"/>
<rect x="88.4" y="56.2" width="5.5" height="33" fill="#555"/>
<rect x="88.4" y="83" width="25" height="6.3" fill="#555"/>
<rect x="34.7" y="34.7" width="26.9" height="49.2" fill="url(#p8v)" stroke="#333" stroke-width="0.8"/>
<rect x="37.4" y="66" width="21.5" height="9.9" fill="#fff" stroke="#333" stroke-width="0.9"/>
<path d="M36 79 H60" stroke="#777" stroke-width="1" stroke-dasharray="1.5 1.5"/>
<rect x="93.8" y="41.9" width="27.7" height="41.1" fill="url(#p8v)" stroke="#333" stroke-width="0.8"/>
<rect x="37" y="84" width="24" height="15" fill="#f6f6f6" stroke="#888" stroke-width="0.4"/>
<rect x="94" y="89.3" width="18" height="10" fill="#f6f6f6" stroke="#888" stroke-width="0.4"/>
<path d="M113 89 V99" stroke="#444" stroke-width="0.6"/>
<!-- base wall -->
<rect x="27.6" y="99.1" width="117" height="20.6" fill="url(#p8s)" stroke="#444" stroke-width="0.7"/>
<rect x="29" y="107" width="83" height="12.7" fill="#5f5f5f"/>
<rect x="31" y="109" width="22" height="10.7" fill="#f8f8f8"/>
<rect x="57" y="109" width="23" height="10.7" fill="#eeeeee"/>
<rect x="84" y="109" width="25" height="10.7" fill="#f4f4f4"/>
<path d="M38 108 C37 110 37 113 38 118 H40 C41 113 41 110 40 108 Z" fill="#222"/><circle cx="39" cy="107" r="1.2" fill="#222"/>
<rect x="135" y="95" width="2" height="4" fill="#333"/>
<!-- ground -->
<rect x="0" y="120" width="152" height="32" fill="url(#p8g)"/>
<path d="M0 120 H152" stroke="#444" stroke-width="0.9"/>
</svg>
</div>

<div class="th" style="left:337px;top:604px;width:129px;height:154px;background:#fff"><svg width="127" height="152" viewBox="0 -0.5 127 152" preserveAspectRatio="none" style="position:static;display:block">
<rect x="0" y="0" width="127" height="152" fill="#fff"/>
<polygon points="98.5,0.8 125.5,91.7 35.5,139.4 1.3,53.9" fill="#bdbdbd"/>
<path d="M100 14 C96 28 90 34 72 38 C50 42 40 60 38 72 C36 84 60 70 78 66 C92 62 86 84 70 90 C56 96 46 110 80 112 C96 114 84 126 76 140" fill="none" stroke="#555" stroke-width="0.6"/>
<path d="M104 30 C110 40 96 58 92 74 C88 90 80 96 70 104" fill="none" stroke="#666" stroke-width="0.5"/>
<rect x="66.5" y="24.5" width="7" height="5" fill="#f4f4f4" stroke="#333" stroke-width="0.6" transform="rotate(-30 70 27)"/>
<rect x="66.5" y="26.8" width="7" height="0.4" fill="#333" transform="rotate(-30 70 27)"/>
<rect x="59.5" y="34.5" width="7" height="5" fill="#f4f4f4" stroke="#333" stroke-width="0.6" transform="rotate(-30 63 37)"/>
<rect x="59.5" y="36.8" width="7" height="0.4" fill="#333" transform="rotate(-30 63 37)"/>
<rect x="81.5" y="30.5" width="7" height="5" fill="#f4f4f4" stroke="#333" stroke-width="0.6" transform="rotate(-30 85 33)"/>
<rect x="81.5" y="32.8" width="7" height="0.4" fill="#333" transform="rotate(-30 85 33)"/>
<rect x="84.5" y="39.5" width="7" height="5" fill="#f4f4f4" stroke="#333" stroke-width="0.6" transform="rotate(-30 88 42)"/>
<rect x="84.5" y="41.8" width="7" height="0.4" fill="#333" transform="rotate(-30 88 42)"/>
<rect x="101.5" y="21.5" width="7" height="5" fill="#f4f4f4" stroke="#333" stroke-width="0.6" transform="rotate(-30 105 24)"/>
<rect x="101.5" y="23.8" width="7" height="0.4" fill="#333" transform="rotate(-30 105 24)"/>
<rect x="98.5" y="35.5" width="7" height="5" fill="#f4f4f4" stroke="#333" stroke-width="0.6" transform="rotate(-30 102 38)"/>
<rect x="98.5" y="37.8" width="7" height="0.4" fill="#333" transform="rotate(-30 102 38)"/>
<rect x="26.5" y="69.5" width="7" height="5" fill="#f4f4f4" stroke="#333" stroke-width="0.6" transform="rotate(-30 30 72)"/>
<rect x="26.5" y="71.8" width="7" height="0.4" fill="#333" transform="rotate(-30 30 72)"/>
<rect x="49.5" y="72.5" width="7" height="5" fill="#f4f4f4" stroke="#333" stroke-width="0.6" transform="rotate(-30 53 75)"/>
<rect x="49.5" y="74.8" width="7" height="0.4" fill="#333" transform="rotate(-30 53 75)"/>
<rect x="68.5" y="63.5" width="7" height="5" fill="#f4f4f4" stroke="#333" stroke-width="0.6" transform="rotate(-30 72 66)"/>
<rect x="68.5" y="65.8" width="7" height="0.4" fill="#333" transform="rotate(-30 72 66)"/>
<rect x="75.5" y="69.5" width="7" height="5" fill="#f4f4f4" stroke="#333" stroke-width="0.6" transform="rotate(-30 79 72)"/>
<rect x="75.5" y="71.8" width="7" height="0.4" fill="#333" transform="rotate(-30 79 72)"/>
<rect x="80.5" y="52.5" width="7" height="5" fill="#f4f4f4" stroke="#333" stroke-width="0.6" transform="rotate(-30 84 55)"/>
<rect x="80.5" y="54.8" width="7" height="0.4" fill="#333" transform="rotate(-30 84 55)"/>
<rect x="89.5" y="55.5" width="7" height="5" fill="#f4f4f4" stroke="#333" stroke-width="0.6" transform="rotate(-30 93 58)"/>
<rect x="89.5" y="57.8" width="7" height="0.4" fill="#333" transform="rotate(-30 93 58)"/>
<rect x="58.5" y="91.5" width="7" height="5" fill="#f4f4f4" stroke="#333" stroke-width="0.6" transform="rotate(-30 62 94)"/>
<rect x="58.5" y="93.8" width="7" height="0.4" fill="#333" transform="rotate(-30 62 94)"/>
<rect x="66.5" y="95.5" width="7" height="5" fill="#f4f4f4" stroke="#333" stroke-width="0.6" transform="rotate(-30 70 98)"/>
<rect x="66.5" y="97.8" width="7" height="0.4" fill="#333" transform="rotate(-30 70 98)"/>
<rect x="46.5" y="94.5" width="7" height="5" fill="#f4f4f4" stroke="#333" stroke-width="0.6" transform="rotate(-30 50 97)"/>
<rect x="46.5" y="96.8" width="7" height="0.4" fill="#333" transform="rotate(-30 50 97)"/>
<rect x="93.5" y="83.5" width="7" height="5" fill="#f4f4f4" stroke="#333" stroke-width="0.6" transform="rotate(-30 97 86)"/>
<rect x="93.5" y="85.8" width="7" height="0.4" fill="#333" transform="rotate(-30 97 86)"/>
<rect x="86.5" y="101.5" width="7" height="5" fill="#f4f4f4" stroke="#333" stroke-width="0.6" transform="rotate(-30 90 104)"/>
<rect x="86.5" y="103.8" width="7" height="0.4" fill="#333" transform="rotate(-30 90 104)"/>
<rect x="97.5" y="105.5" width="7" height="5" fill="#f4f4f4" stroke="#333" stroke-width="0.6" transform="rotate(-30 101 108)"/>
<rect x="97.5" y="107.8" width="7" height="0.4" fill="#333" transform="rotate(-30 101 108)"/>
<rect x="51.5" y="99.5" width="7" height="5" fill="#f4f4f4" stroke="#333" stroke-width="0.6" transform="rotate(-30 55 102)"/>
<rect x="51.5" y="101.8" width="7" height="0.4" fill="#333" transform="rotate(-30 55 102)"/>
<rect x="74.5" y="81.5" width="7" height="5" fill="#f4f4f4" stroke="#333" stroke-width="0.6" transform="rotate(-30 78 84)"/>
<rect x="74.5" y="83.8" width="7" height="0.4" fill="#333" transform="rotate(-30 78 84)"/>
<rect x="64.5" y="122.5" width="7" height="5" fill="#f4f4f4" stroke="#333" stroke-width="0.6" transform="rotate(-30 68 125)"/>
<rect x="64.5" y="124.8" width="7" height="0.4" fill="#333" transform="rotate(-30 68 125)"/>
<rect x="86.5" y="126.5" width="7" height="5" fill="#f4f4f4" stroke="#333" stroke-width="0.6" transform="rotate(-30 90 129)"/>
<rect x="86.5" y="128.8" width="7" height="0.4" fill="#333" transform="rotate(-30 90 129)"/>
<rect x="104.5" y="37.5" width="7" height="5" fill="#f4f4f4" stroke="#333" stroke-width="0.6" transform="rotate(-30 108 40)"/>
<rect x="104.5" y="39.8" width="7" height="0.4" fill="#333" transform="rotate(-30 108 40)"/>
<circle cx="45.6" cy="33.1" r="0.7" fill="#222"/>
<circle cx="18.0" cy="79.3" r="1.2" fill="#222"/>
<circle cx="19.5" cy="65.2" r="1.6" fill="none" stroke="#444" stroke-width="0.5"/>
<circle cx="20.0" cy="65.9" r="1.8" fill="#222"/>
<circle cx="23.6" cy="41.8" r="3.0" fill="#6a6a6a" stroke="#222" stroke-width="0.4"/><circle cx="22.7" cy="40.9" r="1.2" fill="#ddd"/>
<circle cx="114.2" cy="84.3" r="2.5" fill="#6a6a6a" stroke="#222" stroke-width="0.4"/><circle cx="113.5" cy="83.5" r="1.0" fill="#ddd"/>
<circle cx="24.6" cy="65.3" r="3.0" fill="none" stroke="#444" stroke-width="0.5"/>
<circle cx="23.0" cy="52.0" r="1.6" fill="#6a6a6a" stroke="#222" stroke-width="0.4"/><circle cx="22.5" cy="51.5" r="0.6" fill="#ddd"/>
<circle cx="21.3" cy="83.5" r="1.6" fill="#6a6a6a" stroke="#222" stroke-width="0.4"/><circle cx="20.9" cy="83.1" r="0.6" fill="#ddd"/>
<circle cx="51.0" cy="80.7" r="1.2" fill="none" stroke="#444" stroke-width="0.5"/>
<circle cx="72.1" cy="89.3" r="2.5" fill="none" stroke="#444" stroke-width="0.5"/>
<circle cx="84.8" cy="66.3" r="2.0" fill="none" stroke="#444" stroke-width="0.5"/>
<circle cx="37.3" cy="36.6" r="1.0" fill="#222"/>
<circle cx="19.0" cy="51.0" r="1.5" fill="#222"/>
<circle cx="93.3" cy="33.2" r="2.5" fill="#6a6a6a" stroke="#222" stroke-width="0.4"/><circle cx="92.5" cy="32.5" r="1.0" fill="#ddd"/>
<circle cx="56.4" cy="130.4" r="3.0" fill="#6a6a6a" stroke="#222" stroke-width="0.4"/><circle cx="55.5" cy="129.5" r="1.2" fill="#ddd"/>
<circle cx="86.5" cy="86.3" r="3.0" fill="#6a6a6a" stroke="#222" stroke-width="0.4"/><circle cx="85.6" cy="85.4" r="1.2" fill="#ddd"/>
<circle cx="97.7" cy="23.3" r="1.2" fill="#6a6a6a" stroke="#222" stroke-width="0.4"/><circle cx="97.3" cy="22.9" r="0.5" fill="#ddd"/>
<circle cx="113.9" cy="71.9" r="1.2" fill="none" stroke="#444" stroke-width="0.5"/>
<circle cx="52.4" cy="95.2" r="1.2" fill="#6a6a6a" stroke="#222" stroke-width="0.4"/><circle cx="52.1" cy="94.9" r="0.5" fill="#ddd"/>
<circle cx="113.5" cy="57.7" r="1.8" fill="#222"/>
<circle cx="24.2" cy="44.7" r="2.5" fill="#6a6a6a" stroke="#222" stroke-width="0.4"/><circle cx="23.5" cy="44.0" r="1.0" fill="#ddd"/>
<circle cx="110.8" cy="74.6" r="1.6" fill="#6a6a6a" stroke="#222" stroke-width="0.4"/><circle cx="110.4" cy="74.1" r="0.6" fill="#ddd"/>
<circle cx="59.4" cy="80.9" r="1.0" fill="#222"/>
<circle cx="55.7" cy="58.1" r="2.5" fill="none" stroke="#444" stroke-width="0.5"/>
<circle cx="35.5" cy="43.0" r="2.5" fill="#6a6a6a" stroke="#222" stroke-width="0.4"/><circle cx="34.8" cy="42.3" r="1.0" fill="#ddd"/>
<circle cx="101.4" cy="36.9" r="2.0" fill="#6a6a6a" stroke="#222" stroke-width="0.4"/><circle cx="100.8" cy="36.3" r="0.8" fill="#ddd"/>
<circle cx="10.5" cy="65.3" r="2.0" fill="none" stroke="#444" stroke-width="0.5"/>
<circle cx="77.1" cy="53.2" r="1.0" fill="#222"/>
<circle cx="86.0" cy="76.9" r="3.0" fill="none" stroke="#444" stroke-width="0.5"/>
<circle cx="82.0" cy="103.8" r="2.5" fill="#6a6a6a" stroke="#222" stroke-width="0.4"/><circle cx="81.3" cy="103.0" r="1.0" fill="#ddd"/>
<circle cx="97.8" cy="62.1" r="2.5" fill="none" stroke="#444" stroke-width="0.5"/>
<circle cx="53.4" cy="72.8" r="1.5" fill="#222"/>
<circle cx="27.9" cy="55.8" r="0.7" fill="#222"/>
<circle cx="21.3" cy="83.0" r="1.8" fill="#222"/>
<circle cx="21.2" cy="58.6" r="0.7" fill="#222"/>
<circle cx="62.2" cy="28.8" r="2.5" fill="#6a6a6a" stroke="#222" stroke-width="0.4"/><circle cx="61.4" cy="28.1" r="1.0" fill="#ddd"/>
<circle cx="119.2" cy="70.9" r="2.5" fill="#6a6a6a" stroke="#222" stroke-width="0.4"/><circle cx="118.5" cy="70.2" r="1.0" fill="#ddd"/>
<circle cx="44.3" cy="32.3" r="2.0" fill="#6a6a6a" stroke="#222" stroke-width="0.4"/><circle cx="43.7" cy="31.7" r="0.8" fill="#ddd"/>
<circle cx="91.4" cy="72.4" r="1.6" fill="#6a6a6a" stroke="#222" stroke-width="0.4"/><circle cx="91.0" cy="72.0" r="0.6" fill="#ddd"/>
<circle cx="66.8" cy="39.6" r="3.0" fill="#6a6a6a" stroke="#222" stroke-width="0.4"/><circle cx="65.9" cy="38.7" r="1.2" fill="#ddd"/>
<circle cx="49.8" cy="97.8" r="1.2" fill="none" stroke="#444" stroke-width="0.5"/>
<circle cx="93.4" cy="50.8" r="1.2" fill="#6a6a6a" stroke="#222" stroke-width="0.4"/><circle cx="93.0" cy="50.4" r="0.5" fill="#ddd"/>
<circle cx="86.6" cy="46.3" r="2.0" fill="#6a6a6a" stroke="#222" stroke-width="0.4"/><circle cx="86.0" cy="45.7" r="0.8" fill="#ddd"/>
<circle cx="109.9" cy="57.7" r="1.6" fill="#6a6a6a" stroke="#222" stroke-width="0.4"/><circle cx="109.4" cy="57.2" r="0.6" fill="#ddd"/>
<circle cx="68.6" cy="108.5" r="2.0" fill="#6a6a6a" stroke="#222" stroke-width="0.4"/><circle cx="68.0" cy="107.9" r="0.8" fill="#ddd"/>
<circle cx="80.0" cy="88.6" r="1.0" fill="#222"/>
<circle cx="34.9" cy="77.1" r="1.2" fill="#222"/>
<circle cx="61.9" cy="38.2" r="3.0" fill="none" stroke="#444" stroke-width="0.5"/>
<circle cx="115.2" cy="68.7" r="2.0" fill="#6a6a6a" stroke="#222" stroke-width="0.4"/><circle cx="114.6" cy="68.1" r="0.8" fill="#ddd"/>
<circle cx="115.1" cy="58.8" r="1.6" fill="#6a6a6a" stroke="#222" stroke-width="0.4"/><circle cx="114.6" cy="58.3" r="0.6" fill="#ddd"/>
<circle cx="21.2" cy="71.4" r="2.0" fill="#6a6a6a" stroke="#222" stroke-width="0.4"/><circle cx="20.6" cy="70.8" r="0.8" fill="#ddd"/>
<circle cx="32.5" cy="89.9" r="3.0" fill="none" stroke="#444" stroke-width="0.5"/>
<circle cx="102.4" cy="72.5" r="2.0" fill="none" stroke="#444" stroke-width="0.5"/>
<circle cx="98.0" cy="25.2" r="1.2" fill="#6a6a6a" stroke="#222" stroke-width="0.4"/><circle cx="97.6" cy="24.8" r="0.5" fill="#ddd"/>
<circle cx="62.6" cy="36.4" r="1.2" fill="#222"/>
<circle cx="60.9" cy="104.2" r="1.2" fill="#6a6a6a" stroke="#222" stroke-width="0.4"/><circle cx="60.6" cy="103.8" r="0.5" fill="#ddd"/>
<circle cx="89.7" cy="35.4" r="1.6" fill="none" stroke="#444" stroke-width="0.5"/>
<circle cx="82.1" cy="88.4" r="3.0" fill="#6a6a6a" stroke="#222" stroke-width="0.4"/><circle cx="81.2" cy="87.5" r="1.2" fill="#ddd"/>
<circle cx="117.8" cy="93.9" r="2.0" fill="none" stroke="#444" stroke-width="0.5"/>
<circle cx="27.2" cy="80.8" r="0.7" fill="#222"/>
<circle cx="37.7" cy="50.2" r="1.6" fill="#6a6a6a" stroke="#222" stroke-width="0.4"/><circle cx="37.2" cy="49.7" r="0.6" fill="#ddd"/>
<circle cx="94.0" cy="54.1" r="3.0" fill="#6a6a6a" stroke="#222" stroke-width="0.4"/><circle cx="93.1" cy="53.2" r="1.2" fill="#ddd"/>
<circle cx="56.1" cy="30.7" r="2.0" fill="#6a6a6a" stroke="#222" stroke-width="0.4"/><circle cx="55.5" cy="30.1" r="0.8" fill="#ddd"/>
<circle cx="108.7" cy="94.5" r="3.0" fill="#6a6a6a" stroke="#222" stroke-width="0.4"/><circle cx="107.8" cy="93.6" r="1.2" fill="#ddd"/>
<circle cx="56.3" cy="125.1" r="3.0" fill="#6a6a6a" stroke="#222" stroke-width="0.4"/><circle cx="55.4" cy="124.2" r="1.2" fill="#ddd"/>
<g fill="none" stroke="#444" stroke-width="0.5"><circle cx="54" cy="23" r="3.5"/><circle cx="47" cy="47" r="4"/><circle cx="37" cy="57" r="4"/><circle cx="28" cy="83" r="3.5"/><circle cx="109" cy="62" r="3"/><circle cx="105" cy="114" r="3"/></g>
</svg></div>
<div class="th" style="left:550px;top:604px;width:153px;height:154px;background:#6b8a3a"><svg width="151" height="152" viewBox="0 0 151 152" preserveAspectRatio="none" style="position:static;display:block">
<rect x="0" y="0" width="152" height="152" fill="#6b8a3a"/>
<circle cx="29.2" cy="13" r="15.3" fill="#8fb25c"/>
<circle cx="74.2" cy="2.2" r="10" fill="#8fb25c"/>
<circle cx="122.8" cy="144.4" r="18.5" fill="#8fb25c"/>
<g stroke="#3c4a24" stroke-width="0.35"><path d="M19 26 V138 M10 42 H140 M10 123 H140 M98 125 V140 M128 42 V140"/></g>
<!-- plan -->
<rect x="56.2" y="25.6" width="38.7" height="16" fill="#f4f4f4"/>
<g transform="translate(63 33)"><circle r="3.5" fill="#7a9a50"/><circle cx="1" cy="-1" r="2" fill="#a8c878"/></g>
<rect x="16.6" y="40.9" width="117.9" height="82.8" fill="#f2f2f2"/>
<!-- walls -->
<g fill="#e2e2e2" stroke="#777" stroke-width="0.5">
<rect x="17" y="41" width="117" height="5"/>
<rect x="17" y="118" width="117" height="5.5"/>
<rect x="17" y="46" width="5" height="38"/>
<rect x="17" y="90" width="5" height="24"/>
<rect x="128.5" y="46" width="5.5" height="72"/>
<rect x="96" y="46" width="3" height="57"/>
</g>
<g fill="#111"><rect x="16.6" y="40.9" width="5" height="5"/><rect x="95" y="40.9" width="5" height="5"/><rect x="129.5" y="40.9" width="5" height="5"/><rect x="16.6" y="118.7" width="5" height="5"/><rect x="95" y="118.7" width="5" height="5"/><rect x="129.5" y="118.7" width="5" height="5"/></g>
<!-- kitchen -->
<rect x="23" y="48" width="7" height="22" fill="#e8e8e8" stroke="#666" stroke-width="0.4"/>
<g fill="none" stroke="#555" stroke-width="0.4"><circle cx="26.5" cy="52" r="1.5"/><circle cx="26.5" cy="57" r="1.5"/></g>
<rect x="40" y="49" width="22" height="15" fill="#f8f8f8" stroke="#777" stroke-width="0.4"/>
<rect x="48" y="49" width="10" height="15" fill="#d8d8d8"/>
<circle cx="33" cy="64" r="3" fill="#7aa050"/><circle cx="59" cy="63" r="3.2" fill="#6a8a40"/>
<!-- bath -->
<rect x="23" y="78" width="35" height="28" fill="#f6f6f6"/>
<rect x="24" y="79" width="20" height="9" fill="#dedede" stroke="#666" stroke-width="0.5"/>
<rect x="45" y="78" width="12" height="10" fill="#cfcfcf" stroke="#666" stroke-width="0.5"/>
<path d="M23 88 H58 M58 78 V104 M40 96 V104 H58" fill="none" stroke="#666" stroke-width="1.1"/>
<rect x="59" y="80" width="5" height="22" fill="#e6e6e6" stroke="#777" stroke-width="0.4"/>
<!-- center -->
<rect x="75" y="78" width="20" height="22" fill="#e6e6e6" stroke="#777" stroke-width="0.5"/>
<circle cx="86" cy="74" r="3.5" fill="#e2e2e2" stroke="#777" stroke-width="0.4"/>
<circle cx="92" cy="92" r="3" fill="#7a9a50"/>
<!-- bedroom -->
<rect x="105" y="52" width="22" height="22" fill="#dcdcdc" stroke="#555" stroke-width="0.5"/>
<rect x="105" y="52" width="2" height="22" fill="#444"/>
<circle cx="119" cy="84" r="3" fill="#ccc" stroke="#777" stroke-width="0.4"/>
<rect x="104" y="91" width="24" height="8" fill="#ececec" stroke="#555" stroke-width="0.7"/>
<rect x="101" y="109" width="27" height="9" fill="#e0e0e0" stroke="#777" stroke-width="0.4"/>
<path d="M103 110 L108 117 M108 110 L113 117 M113 110 L118 117 M118 110 L123 117" stroke="#999" stroke-width="0.4"/>
<!-- paths dotted -->
<path d="M40 65 C48 72 60 70 70 66 C82 60 74 94 66 100 C56 110 76 118 86 110 C96 104 100 100 112 106" fill="none" stroke="#555" stroke-width="0.5" stroke-dasharray="1 1"/>
<path d="M88 38 C84 50 96 58 92 72" fill="none" stroke="#555" stroke-width="0.5" stroke-dasharray="1 1"/>
<path d="M17 110 H30" stroke="#555" stroke-width="0.5"/>
</svg>
</div>
<div class="th" style="left:775px;top:604px;width:153px;height:154px;background:#e9d9b9"><svg width="151" height="152" viewBox="0 0 151 152" preserveAspectRatio="none" style="position:static;display:block">
<defs>
<pattern id="p11" width="3" height="3" patternUnits="userSpaceOnUse"><rect width="3" height="3" fill="#d6dde3"/><path d="M0 0 H3 M0 0 V3" stroke="#c2cad2" stroke-width="0.4"/></pattern>
</defs>
<rect x="0" y="0" width="152" height="152" fill="#e9d9b9"/>
<path d="M34 5 C44 6 48 16 46 24" fill="none" stroke="#333" stroke-width="0.5"/>
<g stroke="#666" stroke-width="0.35"><path d="M32 14 H118 M124 21 V130 M31 14 V18 M50 14 V18 M68 14 V18 M94 14 V18 M118 14 V18"/></g>
<!-- floor -->
<rect x="30.1" y="17.5" width="90" height="117.9" fill="url(#p11)"/>
<!-- rooms white -->
<rect x="64" y="30" width="8" height="34" fill="#f2f2f2"/>
<rect x="68.8" y="30.1" width="21.6" height="27.9" fill="#f8f8f8" stroke="#555" stroke-width="0.6"/>
<rect x="70" y="57" width="28" height="5" fill="#eeeeee" stroke="#666" stroke-width="0.4"/>
<rect x="53.5" y="63" width="67" height="28" fill="#dde3e8"/>
<rect x="68.8" y="94" width="21.6" height="27" fill="#f8f8f8" stroke="#555" stroke-width="0.6"/>
<rect x="64" y="94" width="8" height="30" fill="#f2f2f2"/>
<rect x="70" y="80" width="28" height="9" rx="1" fill="#f2f2f2" stroke="#666" stroke-width="0.4"/>
<g fill="none" stroke="#666" stroke-width="0.4"><circle cx="78" cy="84.5" r="2.5"/><circle cx="91" cy="84.5" r="2.5"/><circle cx="59" cy="50" r="2.2"/><rect x="66" y="80" width="4" height="8"/></g>
<!-- green walls -->
<g fill="#a9c86a" stroke="#3a3a2a" stroke-width="0.6">
<rect x="30.1" y="17.5" width="5.4" height="10"/>
<rect x="47.2" y="17.5" width="72.9" height="3.6"/>
<rect x="116" y="17.5" width="4.1" height="9"/>
<rect x="30.1" y="52.6" width="5.4" height="48.6"/>
<rect x="30.1" y="124.6" width="5.4" height="10.8"/>
<rect x="30.1" y="130.9" width="90" height="4.5"/>
<rect x="116" y="124" width="4.1" height="11"/>
<rect x="116" y="52.6" width="4.1" height="13"/>
<rect x="116" y="86" width="4.1" height="13"/>
<path d="M49 60.7 H98 V64.4 H53.5 V88.4 H98 V92.2 H49 Z"/>
<rect x="66.8" y="30" width="2.6" height="31"/>
<rect x="66.8" y="92" width="2.6" height="30"/>
<rect x="59" y="30" width="9" height="2.5"/>
<rect x="59" y="121" width="9" height="2.5"/>
</g>
<!-- plants -->
<path d="M77 44 C74 40 80 38 82 42 C86 38 90 44 86 48 C88 52 80 54 78 50 C74 50 74 46 77 44 Z" fill="#9ac050" stroke="#333" stroke-width="0.5"/>
<path d="M48 113 C46 109 52 108 54 111 C58 110 60 116 55 118 C54 122 47 121 48 117 Z" fill="#9ac050" stroke="#333" stroke-width="0.5"/>
<g stroke="#333" stroke-width="0.6"><path d="M109 124 l6 5 M115 124 l-6 5 M112 122 v9"/></g>
<!-- paths -->
<path d="M45 24 C40 36 52 34 62 30 C78 24 106 22 110 40 C114 56 106 66 110 78 C112 88 118 100 106 118 C98 126 80 126 60 128 C40 130 34 120 40 104 C44 92 36 70 42 58" fill="none" stroke="#333" stroke-width="0.55"/>
</svg>
</div>
<div class="th" style="left:1022px;top:604px;width:110px;height:154px;background:#fff"><svg width="108" height="152" viewBox="-0.5 0 108 152" preserveAspectRatio="none" style="position:static;display:block">
<rect x="0" y="0" width="109" height="152" fill="#fff"/>
<path d="M3 4 H104 M3 147 H104" stroke="#eee" stroke-width="0.6"/>
<g fill="none" stroke="#777" stroke-width="0.55">
<path d="M17 47.5 L53 39 L101 47.5"/>
<path d="M19 48.5 H100"/>
<path d="M49 40 L53 45 L57 40"/>
<path d="M19 47 V76 M29 47 V84 M53 42 V84 M76 47 V84 M98 47 V112"/>
<path d="M54 77 L97 108"/>
<path d="M25 84 H33 M49 84 H57 M72 84 H80 M95 112 H103"/>
<path d="M97 74 V112 M100 74 V112" stroke-dasharray="1 1"/>
<path d="M36 58 a2 2 0 1 0 0.1 0 M62 61 l3 4 M70 62 v10 M83 60 h5 v10 M86 65 c-3 2 -3 6 0 8"/>
<path d="M34 72 c2 -4 6 -4 8 0 M40 72 c2 -3 5 -3 6 0 M60 70 c1 -3 4 -3 5 0 v4 M88 66 c-2 4 2 8 6 6"/>
<path d="M8 58 l3 3 M12 56 l1 5 M15 55 l-2 5 M10 63 l3 2 M14 62 l-1 4 M12 66 v10 M9 67 l3 3 M16 66 l-3 3"/>
</g>
<rect x="29" y="72.4" width="70" height="2.7" fill="#888"/>
<path d="M29 73.7 H99" stroke="#444" stroke-width="0.6" stroke-dasharray="2 1"/>
<rect x="35" y="67" width="8" height="4" fill="none" stroke="#888" stroke-width="0.4"/>
</svg>
</div>

<!-- home indicator -->
<div class="abs" style="left:448px;top:888.2px;width:304px;height:5.6px;border-radius:3px;background:#fff;box-shadow:0 0 0 1px #050505"></div>
</body></html>
